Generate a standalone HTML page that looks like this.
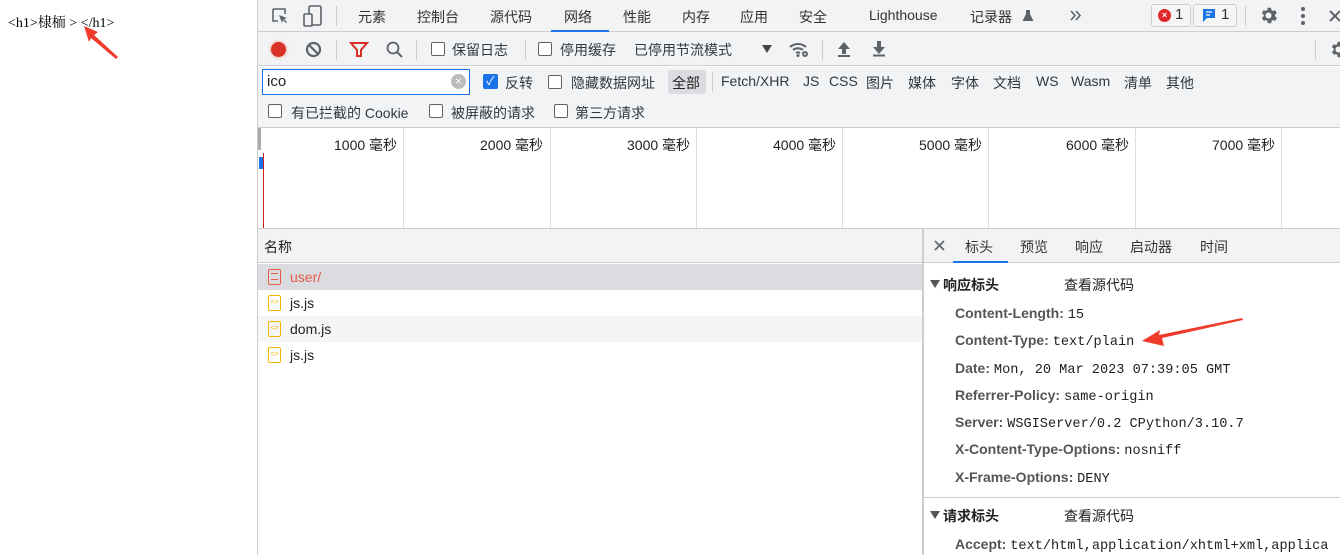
<!DOCTYPE html>
<html><head><meta charset="utf-8"><style>
*{margin:0;padding:0;box-sizing:border-box}
body{width:1340px;height:555px;overflow:hidden;background:#fff;position:relative;font-family:"Liberation Sans","Noto Sans CJK SC",sans-serif;font-size:14px;color:#303942}
.a{position:absolute;white-space:nowrap}
.cb{position:absolute;width:14px;height:14px;border:1px solid #5f6368;border-radius:2px;background:#fff}
.mono{font-family:"Liberation Mono","DejaVu Sans Mono",monospace;font-size:13.6px;color:#222}
.k{font-weight:bold;color:#555;font-size:14px}
.vs{position:absolute;width:1px;background:#ccc}
</style></head><body>
<div class="a" style="left:8px;top:12px;font-family:'Liberation Serif','Noto Serif CJK SC',serif;font-size:14px;color:#000">&lt;h1&gt;棣栭 &gt; &lt;/h1&gt;</div>
<svg class="a" style="left:80px;top:24px" width="42" height="36"><polygon points="4,2 18,8 14,11 38,33 36,35 11,14 9,18" fill="#f03a2a"/></svg>

<div class="a" style="left:257px;top:0;width:1px;height:555px;background:#ccc"></div>
<!-- toolbar 1 -->
<div class="a" style="left:258px;top:0;width:1082px;height:32px;background:#f1f3f4;border-bottom:1px solid #cbcdd1"></div>
<svg class="a" style="left:270px;top:6px" width="20" height="20"><path d="M3 3h12v5M3 3v12h5" stroke="#5f6368" stroke-width="1.6" fill="none"/><path d="M9 9l8 3-3 1 3 3-1 1-3-3-1 3z" fill="#5f6368"/></svg>
<svg class="a" style="left:303px;top:5px" width="20" height="22"><rect x="6" y="1" width="12" height="19" rx="1.5" stroke="#5f6368" stroke-width="1.6" fill="none"/><rect x="1" y="9" width="8" height="12" rx="1" stroke="#5f6368" stroke-width="1.6" fill="#f1f3f4"/></svg>
<div class="vs" style="left:336px;top:6px;height:20px"></div>
<div class="a" style="left:358px;top:7px;color:#333">元素</div>
<div class="a" style="left:417px;top:7px;color:#333">控制台</div>
<div class="a" style="left:490px;top:7px;color:#333">源代码</div>
<div class="a" style="left:564px;top:7px;color:#333">网络</div>
<div class="a" style="left:551px;top:30px;width:58px;height:2px;background:#1a73e8"></div>
<div class="a" style="left:623px;top:7px;color:#333">性能</div>
<div class="a" style="left:682px;top:7px;color:#333">内存</div>
<div class="a" style="left:740px;top:7px;color:#333">应用</div>
<div class="a" style="left:799px;top:7px;color:#333">安全</div>
<div class="a" style="left:869px;top:7px;color:#333">Lighthouse</div>
<div class="a" style="left:970px;top:7px;color:#333">记录器</div>
<svg class="a" style="left:1022px;top:9px" width="12" height="13"><path d="M4 1h4v4l3.5 7h-11L4 5z" fill="#5f6368"/></svg>
<svg class="a" style="left:1069px;top:9px" width="14" height="13"><path d="M2 2l4 4.5-4 4.5M7 2l4 4.5-4 4.5" stroke="#5f6368" stroke-width="1.6" fill="none"/></svg>
<div class="a" style="left:1151px;top:4px;width:40px;height:23px;border:1px solid #ccc;border-radius:3px;background:#f5f5f5"></div>
<div class="a" style="left:1158px;top:9px;width:13px;height:13px;border-radius:7px;background:#e0282c;color:#fff;font-size:9px;line-height:13px;text-align:center;font-weight:bold">×</div>
<div class="a" style="left:1175px;top:6px;color:#333;font-size:15px">1</div>
<div class="a" style="left:1193px;top:4px;width:44px;height:23px;border:1px solid #ccc;border-radius:3px;background:#f5f5f5"></div>
<svg class="a" style="left:1202px;top:8px" width="14" height="15"><path d="M1 1h12v9H5l-4 4z" fill="#1a73e8"/><path d="M4 4h6M4 7h4" stroke="#fff" stroke-width="1.3"/></svg>
<div class="a" style="left:1221px;top:6px;color:#333;font-size:15px">1</div>
<div class="vs" style="left:1245px;top:6px;height:20px"></div>
<svg class="a" style="left:1258px;top:5px" width="21" height="21" viewBox="0 0 24 24"><path fill="#5f6368" d="M19.4 13a7.5 7.5 0 0 0 0-2l2.1-1.6-2-3.5-2.5 1a7.6 7.6 0 0 0-1.7-1L15 3.2h-4l-.4 2.7a7.6 7.6 0 0 0-1.7 1l-2.5-1-2 3.5L6.6 11a7.5 7.5 0 0 0 0 2l-2.1 1.6 2 3.5 2.5-1a7.6 7.6 0 0 0 1.7 1l.4 2.7h4l.4-2.7a7.6 7.6 0 0 0 1.7-1l2.5 1 2-3.5zM12 15.5a3.5 3.5 0 1 1 0-7 3.5 3.5 0 0 1 0 7z"/></svg>
<svg class="a" style="left:1300px;top:6px" width="6" height="20"><circle cx="3" cy="3" r="2" fill="#5f6368"/><circle cx="3" cy="10" r="2" fill="#5f6368"/><circle cx="3" cy="17" r="2" fill="#5f6368"/></svg>
<svg class="a" style="left:1328px;top:9px" width="12" height="14"><path d="M2 2l10 10M12 2L2 12" stroke="#5f6368" stroke-width="2"/></svg>

<!-- toolbar 2 -->
<div class="a" style="left:258px;top:32px;width:1082px;height:34px;background:#f1f3f4;border-bottom:1px solid #cbcdd1"></div>
<div class="a" style="left:271px;top:42px;width:15px;height:15px;border-radius:8px;background:#d93025;box-shadow:0 0 3px #f28b82"></div>
<svg class="a" style="left:305px;top:41px" width="17" height="17"><circle cx="8.5" cy="8.5" r="6.5" stroke="#5f6368" stroke-width="2.2" fill="none"/><line x1="4" y1="4" x2="13" y2="13" stroke="#5f6368" stroke-width="2.2"/></svg>
<div class="vs" style="left:336px;top:40px;height:20px"></div>
<svg class="a" style="left:349px;top:41px" width="20" height="18"><path d="M2 2h16l-6 7v6h-4v-6z" stroke="#d93025" stroke-width="2" fill="none"/></svg>
<svg class="a" style="left:385px;top:40px" width="20" height="20"><circle cx="8" cy="8" r="5.5" stroke="#5f6368" stroke-width="1.8" fill="none"/><line x1="12" y1="12" x2="17" y2="17" stroke="#5f6368" stroke-width="2"/></svg>
<div class="vs" style="left:416px;top:40px;height:20px"></div>
<div class="cb" style="left:431px;top:42px"></div>
<div class="a" style="left:452px;top:40px">保留日志</div>
<div class="vs" style="left:525px;top:40px;height:20px"></div>
<div class="cb" style="left:538px;top:42px"></div>
<div class="a" style="left:560px;top:40px">停用缓存</div>
<div class="a" style="left:634px;top:40px">已停用节流模式</div>
<svg class="a" style="left:762px;top:45px" width="10" height="8"><path d="M0 0h10L5 8z" fill="#444"/></svg>
<svg class="a" style="left:788px;top:40px" width="22" height="18"><path d="M2 7a12 12 0 0 1 16 0M5 10a8 8 0 0 1 10 0M8 13a4 4 0 0 1 4 0" stroke="#5f6368" stroke-width="2" fill="none"/><circle cx="10" cy="15.5" r="1.5" fill="#5f6368"/><circle cx="17" cy="14" r="3" fill="#5f6368"/><circle cx="17" cy="14" r="1" fill="#f1f3f4"/></svg>
<div class="vs" style="left:822px;top:40px;height:20px"></div>
<svg class="a" style="left:837px;top:41px" width="14" height="17"><path d="M7 1l6 7H9v5H5V8H1z" fill="#5f6368"/><rect x="1" y="14" width="12" height="2" fill="#5f6368"/></svg>
<svg class="a" style="left:872px;top:40px" width="14" height="17"><path d="M5 1h4v6h4l-6 7-6-7h4z" fill="#5f6368"/><rect x="1" y="14.5" width="12" height="2" fill="#5f6368"/></svg>
<div class="vs" style="left:1315px;top:40px;height:20px"></div>
<svg class="a" style="left:1328px;top:39px" width="21" height="21" viewBox="0 0 24 24"><path fill="#5f6368" d="M19.4 13a7.5 7.5 0 0 0 0-2l2.1-1.6-2-3.5-2.5 1a7.6 7.6 0 0 0-1.7-1L15 3.2h-4l-.4 2.7a7.6 7.6 0 0 0-1.7 1l-2.5-1-2 3.5L6.6 11a7.5 7.5 0 0 0 0 2l-2.1 1.6 2 3.5 2.5-1a7.6 7.6 0 0 0 1.7 1l.4 2.7h4l.4-2.7a7.6 7.6 0 0 0 1.7-1l2.5 1 2-3.5zM12 15.5a3.5 3.5 0 1 1 0-7 3.5 3.5 0 0 1 0 7z"/></svg>

<!-- filter row -->
<div class="a" style="left:258px;top:67px;width:1082px;height:61px;background:#f1f3f4;border-bottom:1px solid #cbcdd1"></div>
<div class="a" style="left:262px;top:69px;width:208px;height:26px;border:1px solid #1a73e8;background:#fff"></div>
<div class="a" style="left:267px;top:73px;color:#222;font-size:15px">ico</div>
<div class="a" style="left:451px;top:74px;width:15px;height:15px;border-radius:8px;background:#bbb;color:#fff;font-size:12px;line-height:15px;text-align:center">×</div>
<div class="a" style="left:483px;top:74px;width:15px;height:15px;border-radius:2px;background:#1a73e8;color:#fff;font-size:12px;line-height:15px;text-align:center">✓</div>
<div class="a" style="left:505px;top:73px">反转</div>
<div class="cb" style="left:548px;top:75px"></div>
<div class="a" style="left:571px;top:73px">隐藏数据网址</div>
<div class="a" style="left:668px;top:70px;width:38px;height:24px;border-radius:3px;background:#dadce0"></div>
<div class="a" style="left:672px;top:73px;color:#222">全部</div>
<div class="vs" style="left:712px;top:72px;height:20px"></div>
<div class="a" style="left:721px;top:73px">Fetch/XHR</div>
<div class="a" style="left:803px;top:73px">JS</div>
<div class="a" style="left:829px;top:73px">CSS</div>
<div class="a" style="left:866px;top:73px">图片</div>
<div class="a" style="left:908px;top:73px">媒体</div>
<div class="a" style="left:951px;top:73px">字体</div>
<div class="a" style="left:993px;top:73px">文档</div>
<div class="a" style="left:1036px;top:73px">WS</div>
<div class="a" style="left:1071px;top:73px">Wasm</div>
<div class="a" style="left:1124px;top:73px">清单</div>
<div class="a" style="left:1166px;top:73px">其他</div>
<div class="cb" style="left:268px;top:104px"></div>
<div class="a" style="left:291px;top:103px">有已拦截的 Cookie</div>
<div class="cb" style="left:429px;top:104px"></div>
<div class="a" style="left:451px;top:103px">被屏蔽的请求</div>
<div class="cb" style="left:554px;top:104px"></div>
<div class="a" style="left:575px;top:103px">第三方请求</div>

<!-- timeline -->
<div class="a" style="left:258px;top:128px;width:3px;height:22px;background:#aaa"></div>
<div class="a" style="left:259px;top:157px;width:4px;height:12px;background:#1a73e8"></div>
<div class="a" style="left:263px;top:153px;width:1px;height:75px;background:#c5221f"></div>
<div class="vs" style="left:403px;top:128px;height:100px;background:#ddd"></div>
<div class="vs" style="left:550px;top:128px;height:100px;background:#ddd"></div>
<div class="vs" style="left:696px;top:128px;height:100px;background:#ddd"></div>
<div class="vs" style="left:842px;top:128px;height:100px;background:#ddd"></div>
<div class="vs" style="left:988px;top:128px;height:100px;background:#ddd"></div>
<div class="vs" style="left:1135px;top:128px;height:100px;background:#ddd"></div>
<div class="vs" style="left:1281px;top:128px;height:100px;background:#ddd"></div>
<div class="a" style="left:334px;top:135px;color:#222">1000 毫秒</div>
<div class="a" style="left:480px;top:135px;color:#222">2000 毫秒</div>
<div class="a" style="left:627px;top:135px;color:#222">3000 毫秒</div>
<div class="a" style="left:773px;top:135px;color:#222">4000 毫秒</div>
<div class="a" style="left:919px;top:135px;color:#222">5000 毫秒</div>
<div class="a" style="left:1066px;top:135px;color:#222">6000 毫秒</div>
<div class="a" style="left:1212px;top:135px;color:#222">7000 毫秒</div>
<div class="a" style="left:258px;top:228px;width:1082px;height:1px;background:#cbcdd1"></div>

<!-- list -->
<div class="a" style="left:258px;top:229px;width:664px;height:34px;background:#f1f3f4;border-bottom:1px solid #cbcdd1"></div>
<div class="a" style="left:264px;top:237px;color:#222">名称</div>
<div class="a" style="left:258px;top:264px;width:664px;height:26px;background:#dadce0"></div>
<div class="a" style="left:268px;top:269px;width:13px;height:16px;border:1.5px solid #e8594b;border-radius:2px"></div>
<div class="a" style="left:271px;top:273px;width:7px;height:7px;border-top:1.5px solid #e8594b;border-bottom:1.5px solid #e8594b"></div>
<div class="a" style="left:290px;top:269px;color:#e8594b">user/</div>
<div class="a" style="left:258px;top:316px;width:664px;height:26px;background:#f5f5f5"></div>
<div class="a" style="left:268px;top:295px;width:13px;height:16px;border:1.5px solid #f4b400;border-radius:2px;font-size:7px;color:#f4b400;text-align:center;line-height:13px">&lt;&gt;</div>
<div class="a" style="left:290px;top:295px;color:#222">js.js</div>
<div class="a" style="left:268px;top:321px;width:13px;height:16px;border:1.5px solid #f4b400;border-radius:2px;font-size:7px;color:#f4b400;text-align:center;line-height:13px">&lt;&gt;</div>
<div class="a" style="left:290px;top:321px;color:#222">dom.js</div>
<div class="a" style="left:268px;top:347px;width:13px;height:16px;border:1.5px solid #f4b400;border-radius:2px;font-size:7px;color:#f4b400;text-align:center;line-height:13px">&lt;&gt;</div>
<div class="a" style="left:290px;top:347px;color:#222">js.js</div>

<!-- right panel -->
<div class="a" style="left:922px;top:229px;width:2px;height:326px;background:#cbcdd1"></div>
<div class="a" style="left:924px;top:229px;width:416px;height:34px;background:#f1f3f4;border-bottom:1px solid #cbcdd1"></div>
<svg class="a" style="left:934px;top:240px" width="11" height="11"><path d="M1 1l9 9M10 1L1 10" stroke="#5f6368" stroke-width="1.6"/></svg>
<div class="a" style="left:965px;top:237px;color:#333">标头</div>
<div class="a" style="left:953px;top:261px;width:55px;height:2px;background:#1a73e8"></div>
<div class="a" style="left:1020px;top:237px;color:#333">预览</div>
<div class="a" style="left:1075px;top:237px;color:#333">响应</div>
<div class="a" style="left:1130px;top:237px;color:#333">启动器</div>
<div class="a" style="left:1200px;top:237px;color:#333">时间</div>
<svg class="a" style="left:930px;top:280px" width="10" height="8"><path d="M0 0h10L5 8z" fill="#555"/></svg>
<div class="a" style="left:943px;top:275px;color:#222;font-weight:bold">响应标头</div>
<div class="a" style="left:1064px;top:275px;color:#222">查看源代码</div>
<div class="a" style="left:955px;top:305px"><span class="k">Content-Length:</span> <span class="mono">15</span></div>
<div class="a" style="left:955px;top:332px"><span class="k">Content-Type:</span> <span class="mono">text/plain</span></div>
<div class="a" style="left:955px;top:360px"><span class="k">Date:</span> <span class="mono">Mon, 20 Mar 2023 07:39:05 GMT</span></div>
<div class="a" style="left:955px;top:387px"><span class="k">Referrer-Policy:</span> <span class="mono">same-origin</span></div>
<div class="a" style="left:955px;top:414px"><span class="k">Server:</span> <span class="mono">WSGIServer/0.2 CPython/3.10.7</span></div>
<div class="a" style="left:955px;top:441px"><span class="k">X-Content-Type-Options:</span> <span class="mono">nosniff</span></div>
<div class="a" style="left:955px;top:469px"><span class="k">X-Frame-Options:</span> <span class="mono">DENY</span></div>
<div class="a" style="left:924px;top:497px;width:416px;height:1px;background:#cbcdd1"></div>
<svg class="a" style="left:930px;top:511px" width="10" height="8"><path d="M0 0h10L5 8z" fill="#555"/></svg>
<div class="a" style="left:943px;top:506px;color:#222;font-weight:bold">请求标头</div>
<div class="a" style="left:1064px;top:506px;color:#222">查看源代码</div>
<div class="a" style="left:955px;top:536px"><span class="k">Accept:</span> <span class="mono">text/html,application/xhtml+xml,applica</span></div>
<svg class="a" style="left:1140px;top:316px" width="104" height="34"><polygon points="2,25 20,14 19,19 102,2 103,4 22,22 24,30" fill="#f03a2a"/></svg>
</body></html>
